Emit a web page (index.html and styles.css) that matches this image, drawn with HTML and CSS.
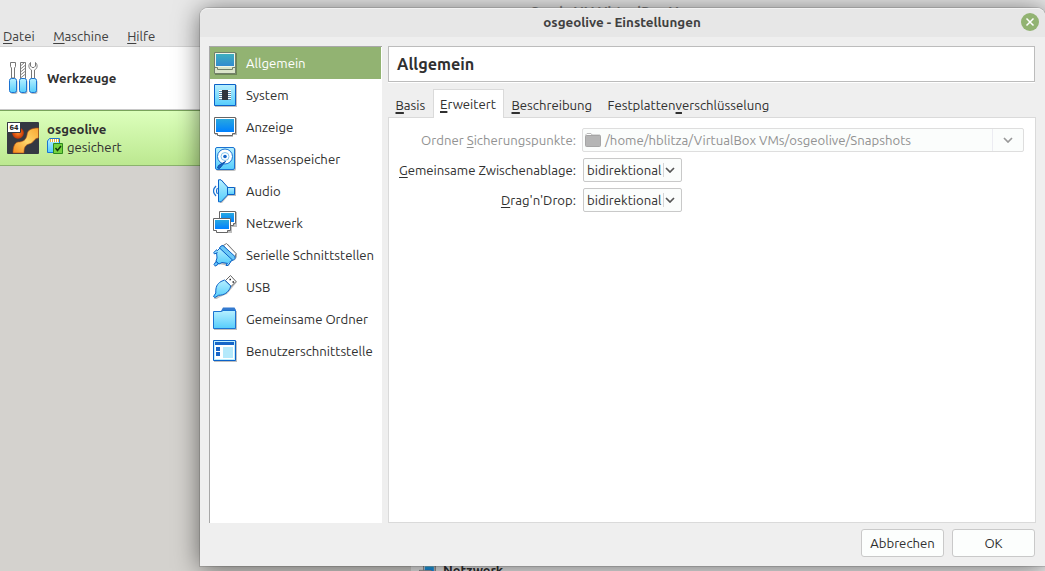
FILE: index.html
```html
<!DOCTYPE html>
<html lang="de">
<head>
<meta charset="utf-8">
<title>osgeolive - Einstellungen</title>
<link rel="stylesheet" href="styles.css">
</head>
<body>
<svg class="defs" width="0" height="0" aria-hidden="true">
  <defs>
    <linearGradient id="light" x1="0" y1="0" x2="0" y2="1"><stop offset="0" stop-color="#b8f0ff"/><stop offset="1" stop-color="#55cdfc"/></linearGradient>
    <linearGradient id="screen" x1="0" y1="0" x2="0" y2="1"><stop offset="0" stop-color="#28a8e0"/><stop offset="1" stop-color="#0080ff"/></linearGradient>
    <linearGradient id="dim" x1="0" y1="0" x2="0" y2="1"><stop offset="0" stop-color="#3fb0bd"/><stop offset="1" stop-color="#3189d0"/></linearGradient>
    <linearGradient id="fire" x1="0" y1="1" x2="1" y2="0"><stop offset="0" stop-color="#f58a1c"/><stop offset=".5" stop-color="#ffd76b"/><stop offset="1" stop-color="#f9a530"/></linearGradient>
    <radialGradient id="ball"><stop offset="0" stop-color="#ff8a2a"/><stop offset="1" stop-color="#c53505"/></radialGradient>
  </defs>
</svg>
<div class="manager">
  <nav class="menubar"><span><u>D</u>atei</span><span><u>M</u>aschine</span><span><u>H</u>ilfe</span></nav>
  <div class="machines">
    <div class="machine tools">
      <svg class="toolicon" viewBox="0 0 32 34">
        <g class="shadow" transform="translate(1 1)"><rect x="1.500" y="18" width="7" height="14" rx="2"/><rect x="11.500" y="18" width="7" height="14" rx="2"/><rect x="21.500" y="18" width="7" height="14" rx="2"/></g>
        <path d="M2.500 1.500h5v4L6.500 7v10h-3V7l-1-1.500z" fill="#fff" stroke="#777"/>
        <path d="M12.500 1.500h5v16h-5z" fill="#fff" stroke="#777"/><path d="M12.500 5l4-3.500M12.500 8l5-4M12.500 11l5-4M12.500 14l5-4M12.500 17l5-4" stroke="#888"/>
        <path d="M22.500 1.500c-2.500 2.500-2 6 1 7.500v9h3V9c3-1.500 3.500-5 1-7.500v3.500l-1.500 1.500h-2l-1.500-1.500z" fill="#fff" stroke="#777"/>
        <g fill="url(#light)" stroke="#1b73d2"><rect x="1.500" y="17.500" width="7" height="14" rx="2"/><rect x="11.500" y="17.500" width="7" height="14" rx="2"/><rect x="21.500" y="17.500" width="7" height="14" rx="2"/></g>
      </svg>
      <b>Werkzeuge</b>
    </div>
    <div class="machine active">
      <svg class="osicon" viewBox="0 0 32 32">
        <rect width="32" height="32" rx="1" fill="#353942"/>
        <circle cx="11" cy="11" r="5.800" fill="url(#ball)"/>
        <path d="M31.500 6C24 6 20.500 8 20 13 19 18 16 20 11 20 7 21 6 26 6 31h11c0-5 1-8 5-9 5-1 5-6 9.500-6z" fill="url(#fire)" stroke="#b04b10" stroke-width=".6"/>
        <path d="M.5.5h13v10H.5z" fill="#fff" stroke="#353942"/>
        <text x="2.500" y="8" textLength="9" lengthAdjust="spacingAndGlyphs" class="bits">64</text>
      </svg>
      <div class="machine-text">
        <b>osgeolive</b>
        <span class="state"><svg viewBox="0 0 16 16"><path d="M.5 3l2-2.500h10v14H.5z" fill="url(#light)" stroke="#1b73d2"/><path d="M3 2.500h9" stroke="#fff" stroke-width="3"/><path d="M3 2.500h9" stroke="#f1b43c" stroke-width="3" stroke-dasharray="1 1"/><path d="M6.500 5.500h9v10h-9z" fill="#74d23f" stroke="#2c8a1e"/><path d="M8.500 10l2 2.500 3.500-4.500" fill="none" stroke="#163a10" stroke-width="1.500"/></svg><span>gesichert</span></span>
      </div>
    </div>
  </div>
  <div class="details"><svg viewBox="0 0 24 24"><use href="#net"/></svg><b>Netzwerk</b></div>
  <div class="apptitle">Oracle VM VirtualBox Manager</div>
</div>

<section class="dialog">
  <header class="titlebar"><b>osgeolive - Einstellungen</b><button class="close" aria-label="Schließen"><svg viewBox="0 0 18 18"><path d="M5.500 5.500l7 7M12.500 5.500l-7 7" stroke="#fff" stroke-width="1.500"/></svg></button></header>
  <div class="content">
    <ul class="pages">
      <li class="sel"><svg viewBox="0 0 24 24"><path class="shadow" d="M2 2h22v22H2z"/><path d="M1.500 1.500h21v21h-21z" fill="#dbe5ca" stroke="#72806a"/><path d="M2.500 2.500h19v13h-19z" fill="url(#dim)" stroke="#f0f5e8"/><path d="M1.500 16.500h3v2h15v-2h3" fill="none" stroke="#72806a"/></svg><span>Allgemein</span></li>
      <li><svg viewBox="0 0 24 24"><path class="shadow" d="M2 2h22v22H2z"/><path d="M1.500 1.500h21v21h-21z" fill="url(#light)" stroke="#0b62c8"/><path d="M6 7.500h12M6 9.500h12M6 11.500h12M6 13.500h12M6 15.500h12" stroke="#fff"/><path d="M6 8.500h12M6 10.500h12M6 12.500h12M6 14.500h12M6 16.500h12" stroke="#5988a4"/><path d="M9 7h6v10H9z" fill="#30343b"/></svg><span>System</span></li>
      <li><svg viewBox="0 0 24 24"><path class="shadow" d="M2 3h22v17h-4v2H6v-2H2z"/><path d="M1.500 2.500h21v16h-3v2h-15v-2h-3z" fill="#fff" stroke="#666"/><path d="M3 4h18v13H3z" fill="url(#screen)"/></svg><span>Anzeige</span></li>
      <li><svg viewBox="0 0 24 24"><rect class="shadow" x="3" y="1" width="20" height="23" rx="2"/><rect x="2.500" y=".5" width="19" height="22" rx="1.500" fill="url(#light)" stroke="#1b73d2"/><circle cx="12" cy="9.500" r="7.500" fill="#fff" stroke="#1b73d2"/><circle cx="12" cy="9.500" r="4" fill="#fff" stroke="#82c5ee"/><circle cx="12" cy="9.500" r="1.800" fill="#1666c8"/><path d="M12.500 14.500l-7 4-1 2.500 2 .5z" fill="#1666c8" stroke="#0b50aa"/></svg><span>Massenspeicher</span></li>
      <li><svg viewBox="0 0 24 24"><path class="shadow" d="M7 1h2l6 7h8v9h-8l-6 7H7z"/><path d="M3 7Q-2 12 3 17M4.500 9Q2.500 12 4.500 15" fill="none" stroke="#1b73d2" stroke-width="1.200"/><path d="M14.500 8.500h7v7h-7z" fill="url(#light)" stroke="#0b62c8"/><path d="M5.500.8H8l6.500 7.200v8L8 22.800H5.500z" fill="url(#light)" stroke="#0b62c8"/></svg><span>Audio</span></li>
      <li><svg viewBox="0 0 24 24"><g id="net"><path class="shadow" d="M7 1h17v15h-5v6H4v-2H1V8h6z"/><path d="M6.500.5h16v12h-2v2h-14z" fill="#fff" stroke="#666"/><path d="M8 2h13v9H8z" fill="url(#screen)"/><path d="M.5 7.500h17v12h-3v2h-11v-2h-3z" fill="#fff" stroke="#666"/><path d="M2 9h14v9H2z" fill="url(#screen)"/></g></svg><span>Netzwerk</span></li>
      <li><svg viewBox="0 0 24 24"><path class="shadow" d="M9 2l6-1 9 10v3l-2 3-5 2-1 4-5-1-6-1-3 3-1-2 2-4z"/><path d="M10.500 2.500l3-2 9.500 10-1 4-3 0z" fill="#fff" stroke="#777"/><path d="M7 5L3.500 8.500 4 15 3 18l3 3 3-1.500 6 1 5-4z" fill="url(#light)" stroke="#0b62c8"/><path d="M4.500 9.500L1.500 11 .7 9.500 4 6.500M14.500 20l-1.500 2.500h2l3-4" fill="#8fdcff" stroke="#0b62c8"/><path d="M6.500 5l1.500-2 2-.5L22 13.500v2l-2 2z" fill="#6cc8f5" stroke="#0b62c8"/><path d="M3 18.500l2.500 2.500L2.500 23 1 21.500z" fill="#68c8ff" stroke="#0b62c8"/></svg><span>Serielle Schnittstellen</span></li>
      <li><svg viewBox="0 0 24 24"><path class="shadow" d="M18 1l6 6-5 6-5 6-7 3-5 3-1-2 4-9 7-6z"/><path d="M12.500 5.500l5-5 5.500 6-5 5z" fill="#fff" stroke="#666"/><path d="M16.500 4.500h1.500M19.500 7h1.500" stroke="#222" stroke-width="1.500"/><path d="M11.500 5L8 6.500C4 9 2.500 12 2.800 18L.5 21.500l1.500 1L5.500 20.300c6 0 9.500-3 11.500-7l.8-2.300z" fill="url(#light)" stroke="#0b62c8"/></svg><span>USB</span></li>
      <li><svg viewBox="0 0 24 24"><path class="shadow" d="M1 4h23v19H1z"/><path d="M8 4l2-3.500h11.500L23 3v3H8z" fill="#3379cf"/><path d="M.5 4.500h8l1.500-1h12.500v18H.5z" fill="url(#light)" stroke="#1b73d2"/></svg><span>Gemeinsame Ordner</span></li>
      <li><svg viewBox="0 0 24 24"><path class="shadow" d="M1 2h23v21H1z"/><path d="M.5 1.500h22v20H.5z" fill="#bceeff" stroke="#0b62c8"/><path d="M2 3h19v17H2z" fill="#fff"/><path d="M2 3h19v3H2zM3 8h4v4H3zM3 13h4v4H3z" fill="#1666c8"/><path d="M10 8h10v11H10z" fill="#b4e9fb"/></svg><span>Benutzerschnittstelle</span></li>
    </ul>
    <main class="settings">
      <h1>Allgemein</h1>
      <div class="tabs"><span class="tab"><u>B</u>asis</span><span class="tab current"><u>E</u>rweitert</span><span class="tab third"><u>B</u>eschreibung</span><span class="tab fourth">Festplatten<u>v</u>erschlüsselung</span></div>
      <div class="panel">
        <div class="row off"><label><span>Ordner <u>S</u>icherungspunkte:</span></label><div class="combo path"><svg class="folder" viewBox="0 0 16 14"><path d="M1 4V1.500L2 .5h4l1 1.500h8V4" fill="#fff" stroke="#bbb"/><rect x=".5" y="2.500" width="15" height="11" rx="1" fill="#b5b5b5" stroke="#a5a5a5"/></svg><span>/home/hblitza/VirtualBox VMs/osgeolive/Snapshots</span><i class="arrow"><svg viewBox="0 0 10 6"><path d="M1 1l4 4 4-4"/></svg></i></div></div>
        <div class="row"><label><span><u>G</u>emeinsame Zwischenablage:</span></label><div class="combo"><span>bidirektional</span><i class="arrow"><svg viewBox="0 0 10 6"><path d="M1 1l4 4 4-4"/></svg></i></div></div>
        <div class="row"><label><span><u>D</u>rag'n'Drop:</span></label><div class="combo"><span>bidirektional</span><i class="arrow"><svg viewBox="0 0 10 6"><path d="M1 1l4 4 4-4"/></svg></i></div></div>
      </div>
    </main>
  </div>
  <footer><button class="btn">Abbrechen</button><button class="btn">OK</button></footer>
</section>
</body>
</html>
```
FILE: styles.css
```css
* { box-sizing: border-box; }
body { margin: 0; width: 1045px; height: 571px; overflow: hidden; position: relative; font: 13.17px/20px Ubuntu, "Noto Sans", sans-serif; color: #303030; background: #d4d2ce; white-space: nowrap; }
.defs { position: absolute; }
u { text-decoration-thickness: 1px; text-underline-offset: 2px; }
.shadow { fill: #000; opacity: .25; }

.manager { height: 571px; display: flex; flex-direction: column; }
.menubar { height: 47px; flex: none; background: #e8e8e8; border-bottom: 1px solid #d4d4d4; padding: 26px 3px 0; display: flex; gap: 18.5px; color: #404040; }
.machines { width: 411px; }
.machine { display: flex; align-items: center; }
.tools { height: 63px; background: #fff; border-bottom: 1px solid #c8c8c8; padding-left: 8px; gap: 7px; }
.toolicon { width: 32px; height: 34px; }
.active { height: 56px; background: linear-gradient(#dcffbc, #bce890); border-top: 1px solid #79a35b; border-bottom: 1px solid #8bb36d; padding-left: 7px; gap: 8px; }
.osicon { width: 32px; height: 32px; }
.bits { font: bold 7px "DejaVu Sans", sans-serif; fill: #222; }
.machine-text { display: flex; flex-direction: column; line-height: 18px; }
.state { display: flex; gap: 4px; align-items: center; }
.state svg { width: 16px; height: 16px; margin-top: -2px; }
.details { margin: auto 0 0 411px; height: 11px; background: #ececec; padding: 0 8px; display: flex; gap: 7px; align-items: flex-start; }
.details svg { width: 17px; height: 17px; flex: none; margin-top: 5px; }
.apptitle { position: absolute; left: 530px; top: 1px; font-weight: 600; color: #888; }

.dialog { position: absolute; left: 200px; top: 8px; width: 845px; height: 558px; background: #efefef; border-radius: 8px 8px 0 0; box-shadow: 0 0 0 1px rgba(0,0,0,.12), 0 2px 26px rgba(0,0,0,.55); display: flex; flex-direction: column; }
.titlebar { height: 29px; background: #e7e7e7; border-radius: 8px 8px 0 0; border-top: 1px solid #f2f2f2; display: flex; align-items: center; padding: 0 6px 0 23px; color: #404040; font-size: 13.4px; }
.titlebar b { margin: -1px auto 0; }
.close { width: 18px; height: 18px; border: 0; padding: 0; margin-top: -2px; border-radius: 50%; background: #92b372; }
.close svg { display: block; }
.content { display: flex; gap: 6px; padding: 9px 9px 0; height: 486px; }
.pages { list-style: none; margin: 0; padding: 0; width: 173px; flex: none; background: #fff; border: solid #a8a8a8; border-width: 1px 0 0 1px; }
.pages li { height: 32px; padding-left: 3px; display: flex; align-items: center; gap: 9px; }
.pages svg { width: 24px; height: 24px; flex: none; }
.pages .sel { background: #92b372; color: #fff; margin-right: 1px; }
.settings { flex: 1; display: flex; flex-direction: column; min-width: 0; }
h1 { margin: 0 1px 0 0; height: 36px; flex: none; border: 1px solid #bcbcbc; box-shadow: 0 1px #fff; background: #fff; font-size: 16.2px; line-height: 34px; padding-left: 8px; }
.tabs { height: 36px; flex: none; display: flex; align-items: flex-end; margin-bottom: -1px; position: relative; }
.tab { height: 28px; line-height: 30px; width: 45px; padding-left: 7.5px; }
.current { width: 71px; height: 29px; line-height: 28px; padding-left: 6px; background: #fff; border: 1px solid #dadada; border-bottom: 0; }
.third { width: 95.5px; }
.fourth { width: 180px; padding-left: 8px; }
.tab u { text-decoration-thickness: 2px; }
.panel { flex: 1; background: #fff; border: 1px solid #dadada; padding: 10px 11px; }
.row { display: flex; height: 24px; margin-bottom: 6px; gap: 7px; }
.row label { width: 176px; display: flex; justify-content: flex-end; align-items: center; }
.combo { width: 99px; border: 1px solid #c9c9c9; border-radius: 2px; background: #fbfdfc; display: flex; align-items: center; padding-left: 3px; }
.arrow { margin-left: auto; width: 18px; height: 14px; border-left: 1px solid #d5d5d5; display: flex; align-items: center; padding-left: 1px; }
.arrow svg { width: 10px; height: 6px; fill: none; stroke: #555; stroke-width: 1.7; }
.off { color: #929292; gap: 6px; }
.off .arrow svg { stroke: #999; }
.path { width: 442px; border-color: #dedede; padding-left: 2px; gap: 4px; }
.path .arrow { width: 31px; height: 22px; border-color: #ececf2; padding-left: 10px; }
.folder { width: 16px; height: 14px; }
footer { display: flex; justify-content: flex-end; gap: 8px; padding: 6px 10px 0; }
.btn { width: 83px; height: 28px; border: 1px solid #c9c9c9; border-radius: 3px; background: #fcfefd; font: inherit; color: inherit; padding: 0; }
```
